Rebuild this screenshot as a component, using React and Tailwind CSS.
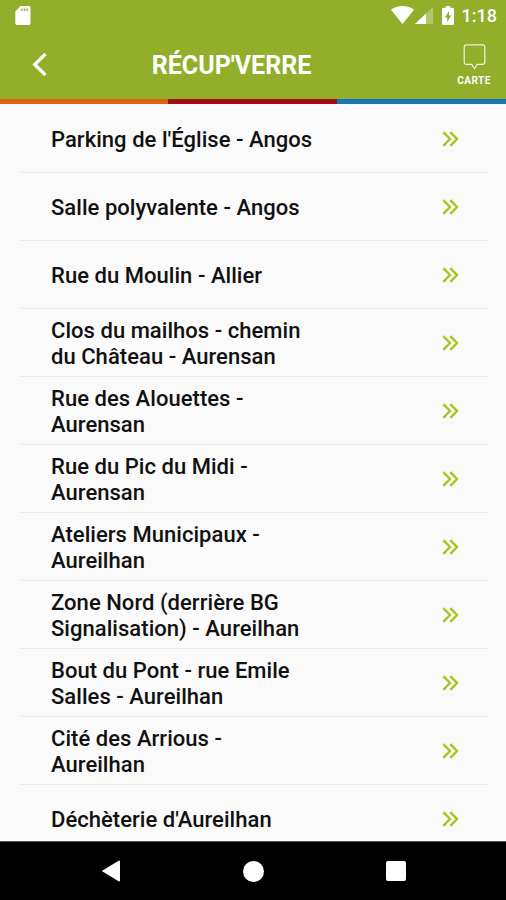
const places = [
  "Parking de l'Église - Angos",
  "Salle polyvalente - Angos",
  "Rue du Moulin - Allier",
  "Clos du mailhos - chemin du Château - Aurensan",
  "Rue des Alouettes - Aurensan",
  "Rue du Pic du Midi - Aurensan",
  "Ateliers Municipaux - Aureilhan",
  "Zone Nord (derrière BG Signalisation) - Aureilhan",
  "Bout du Pont - rue Emile Salles - Aureilhan",
  "Cité des Arrious - Aureilhan",
  "Déchèterie d'Aureilhan",
];

function StatusBar() {
  return (
    <div className="flex h-[30px] shrink-0 items-center pr-[9px] pl-[15px] text-white">
      <svg width="16" height="19" viewBox="0 0 16 19">
        <path
          fill="currentColor"
          fillRule="evenodd"
          d="M5.500 0H14a1.500 1.500 0 0 1 1.500 1.500v15.800A1.700 1.700 0 0 1 14 19H2a1.700 1.700 0 0 1-1.700-1.700V5.400zM6.200 2.600v2.400h1.400V2.600zm2.600 0v2.400h1.400V2.600zm2.600 0v2.400h1.400V2.600z"
        />
      </svg>
      <div className="ml-auto flex items-center">
        <svg width="23" height="18" viewBox="0 0 23 18">
          <path fill="currentColor" d="M11.500 18L0 3.800C6.500-1.200 16.500-1.200 23 3.800z" />
        </svg>
        <svg width="18" height="17" viewBox="0 0 18 17" className="ml-[1px]">
          <path fill="currentColor" fillOpacity="0.3" d="M18 0v17H0z" />
          <path fill="currentColor" d="M11 6.600V17H0z" />
        </svg>
        <svg width="12" height="19" viewBox="0 0 12 19" className="ml-[9px]">
          <path
            fill="currentColor"
            fillRule="evenodd"
            d="M3.800 0h4.400v1.800h2.300q1.500 0 1.500 1.500v14.200q0 1.500-1.500 1.500h-9Q0 19 0 17.500V3.300q0-1.500 1.500-1.500h2.300zM7 5L2.800 11.500h2.400V16l4-6.600H7z"
          />
        </svg>
        <span className="ml-[8px] pt-[2px] text-[18px] leading-none font-medium">1:18</span>
      </div>
    </div>
  );
}

function Header() {
  return (
    <header className="grid h-[69px] shrink-0 grid-cols-[64px_1fr_64px] text-white">
      <button className="flex items-start pt-[22px] pl-[32px]">
        <svg width="16" height="25" viewBox="0 0 16 25" fill="none">
          <path d="M13.500 2L2.700 12.500l10.800 10.500" stroke="currentColor" strokeWidth="3.200" />
        </svg>
      </button>
      <h1 className="pt-[21px] pr-[43px] text-center text-[25px] leading-[30px] font-bold">
        RÉCUP'VERRE
      </h1>
      <button className="flex flex-col items-center pt-[14px]">
        <svg width="23" height="26" viewBox="0 0 23 26" fill="none">
          <path
            d="M3.500.8h16q2.300 0 2.300 2.300v15q0 2.300-2.300 2.300h-5.300l-2.700 4.300-2.700-4.300H3.500q-2.300 0-2.300-2.300v-15Q1.200.8 3.500.8z"
            stroke="currentColor"
            strokeOpacity="0.85"
            strokeWidth="1.200"
          />
        </svg>
        <span className="mt-[5px] text-[10px] leading-[12px] font-bold tracking-[0.5px]">
          CARTE
        </span>
      </button>
    </header>
  );
}

function PlaceRow({ name }) {
  return (
    <li className="flex h-[68px] shrink-0 items-center border-b border-[#ebebeb] pr-[29px] pl-[31px]">
      <span className="w-[266px] pt-[2px] text-[22px] leading-[26px] font-medium tracking-[0.04px]">
        {name}
      </span>
      <svg width="17" height="16" viewBox="0 0 17 16" fill="none" className="ml-auto">
        <path
          d="M1.300 1.200L8 8l-6.700 6.800M8.300 1.200L15 8l-6.700 6.800"
          stroke="#a5c61f"
          strokeWidth="2.400"
        />
      </svg>
    </li>
  );
}

function NavBar() {
  return (
    <nav className="flex h-[59px] shrink-0 items-center justify-between border-t border-[#555] bg-black pr-[100px] pl-[102px] text-white">
      <svg width="18" height="22" viewBox="0 0 18 22">
        <path fill="currentColor" d="M17 .5q1 0 1 1v19q0 1-1 1L.5 11.600q-.8-.6 0-1.200z" />
      </svg>
      <div className="size-[21px] rounded-full bg-white" />
      <div className="size-[20px] rounded-[2px] bg-white" />
    </nav>
  );
}

export default function App() {
  return (
    <div className="flex h-[900px] w-[506px] flex-col overflow-hidden bg-[#fafafa] font-['Roboto',sans-serif] text-[#111]">
      <div className="bg-[#92ae2a]">
        <StatusBar />
        <Header />
      </div>
      <div className="flex h-[5px] shrink-0">
        <div className="w-[168px] bg-[#dc6410]" />
        <div className="w-[169px] bg-[#a01010]" />
        <div className="flex-1 bg-[#1676b8]" />
      </div>
      <ul className="flex min-h-0 flex-1 flex-col overflow-hidden pt-px pr-[18px] pl-[20px]">
        {places.map((name) => (
          <PlaceRow key={name} name={name} />
        ))}
      </ul>
      <NavBar />
    </div>
  );
}
